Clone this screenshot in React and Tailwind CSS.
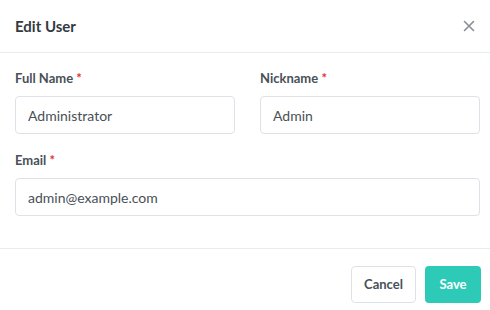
import React, { useState } from 'react';

const Field = ({ label, value, onChange }) => (
    <div className="flex flex-col">
        <label className="text-[13px] font-bold text-[#495057] leading-none mb-[11px]">
            {label} <span className="text-[#e03131]">*</span>
        </label>
        <input
            type="text"
            value={value}
            onChange={(e) => onChange(e.target.value)}
            className="h-[38px] w-full rounded border border-[#dee2e6] bg-white px-3 text-[14px] text-[#495057] outline-none"
        />
    </div>
);

const App = () => {
    const [fullName, setFullName] = useState('Administrator');
    const [nickname, setNickname] = useState('Admin');
    const [email, setEmail] = useState('admin@example.com');

    return (
        <div className="w-[490px] h-[310px] bg-white font-['Lato',sans-serif] overflow-hidden">
            <div className="flex items-center justify-between h-[53px] px-[15px] border-b border-[#e9ecef]">
                <h2 className="text-[15px] font-bold text-[#343a40]">Edit User</h2>
                <button className="text-[#868e96]">
                    <svg width="12" height="12" viewBox="0 0 12 12" fill="none" stroke="currentColor" strokeWidth="1.6" strokeLinecap="round">
                        <path d="M1.5 1.5l9 9M10.5 1.5l-9 9" />
                    </svg>
                </button>
            </div>

            <div className="pl-[15px] pr-[10px] pt-[19px] pb-[32px] border-b border-[#e9ecef] flex flex-col gap-[20px]">
                <div className="grid grid-cols-2 gap-[25px]">
                    <Field label="Full Name" value={fullName} onChange={setFullName} />
                    <Field label="Nickname" value={nickname} onChange={setNickname} />
                </div>
                <Field label="Email" value={email} onChange={setEmail} />
            </div>

            <div className="flex justify-end gap-[9px] px-[9px] pt-[17px]">
                <button className="h-[37px] w-[65px] rounded border border-[#dee2e6] bg-white text-[13px] font-bold text-[#495057]">
                    Cancel
                </button>
                <button className="h-[37px] w-[56px] rounded bg-[#2dcbb7] text-[13px] font-bold text-white">
                    Save
                </button>
            </div>
        </div>
    );
};

export default App;
